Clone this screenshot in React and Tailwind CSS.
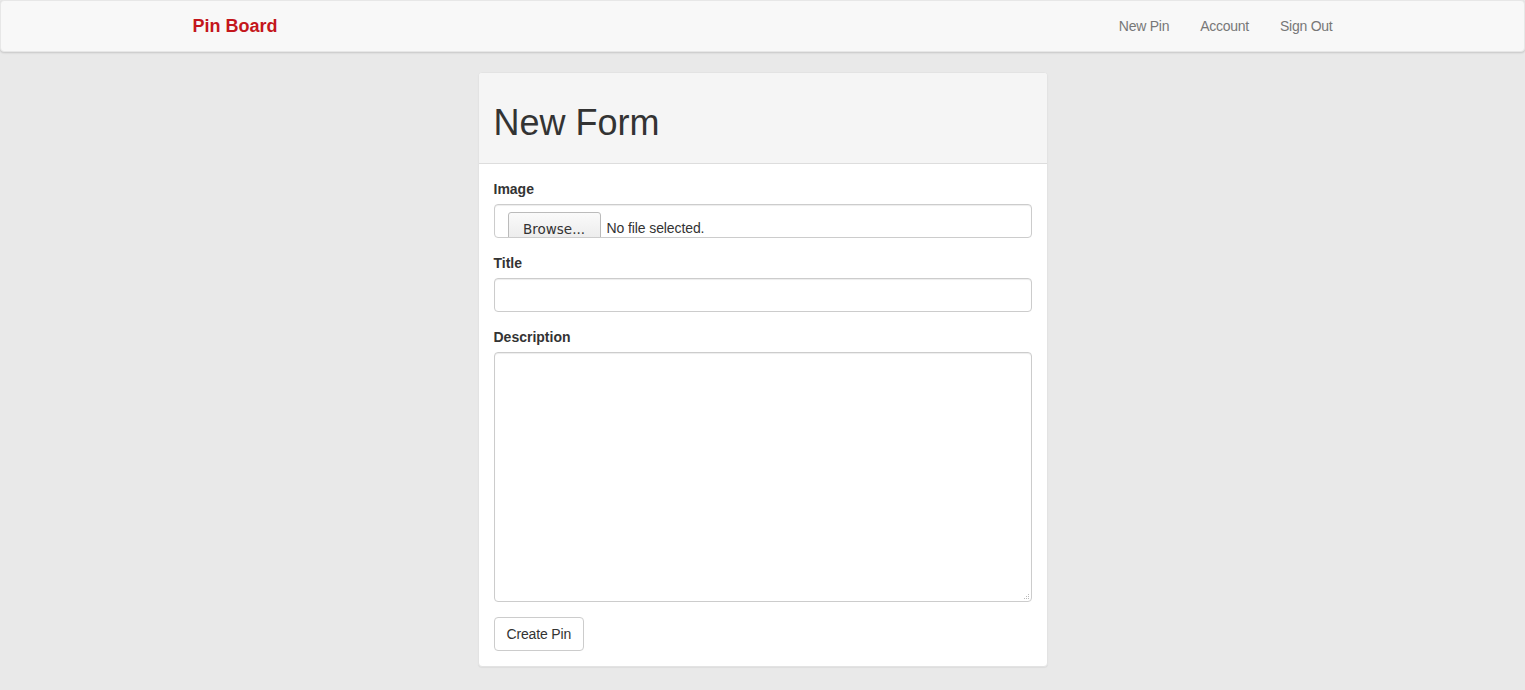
export default function App() {
  const font = { fontFamily: '"Liberation Sans", Arial, sans-serif' };
  return (
    <div className="min-h-[690px] bg-[#e9e9e9] text-[14px] leading-[20px] text-[#333]" style={font}>
      <nav className="h-[52px] bg-[#f8f8f8] border border-[#e7e7e7] rounded-[4px] shadow-[0_1px_2px_rgba(0,0,0,0.15)]">
        <div className="w-[1170px] mx-auto flex items-center justify-between h-[50px]">
          <a className="px-[15px] text-[18px] font-bold leading-[20px] text-[#c4161c]">Pin Board</a>
          <ul className="flex tracking-[-0.25px]">
            <li><a className="block pl-[15px] pr-[16px] leading-[20px] text-[#777]">New Pin</a></li>
            <li><a className="block pl-[15px] pr-[16px] leading-[20px] text-[#777]">Account</a></li>
            <li><a className="block pl-[15px] pr-[15px] leading-[20px] text-[#777]">Sign Out</a></li>
          </ul>
        </div>
      </nav>
      <div className="pt-[20px] flex justify-center">
        <div className="w-[570px] bg-white border border-[#e3e3e3] rounded-[4px] shadow-[0_1px_1px_rgba(0,0,0,0.05)]">
          <div className="bg-[#f5f5f5] border-b border-[#ddd] px-[15px] py-[10px] rounded-t-[3px]">
            <h1 className="mt-[20px] mb-[10px] text-[36px] leading-[39.6px] font-normal text-[#333]">New Form</h1>
          </div>
          <div className="p-[15px]">
            <div className="mb-[15px]">
              <label className="block mb-[5px] font-bold">Image</label>
              <div className="h-[34px] border border-[#ccc] rounded-[4px] overflow-hidden flex items-start pl-[13px] pt-[7px] shadow-[inset_0_1px_1px_rgba(0,0,0,0.075)]">
                <div className="w-[93px] h-[36px] border border-[#bbb] rounded-[3px] bg-gradient-to-b from-[#fafafa] to-[#e8e8e8] text-[13.5px] text-[#333] text-center pt-[7px] leading-[18px] shrink-0" style={{ fontFamily: '"DejaVu Sans", sans-serif' }}>Browse...</div>
                <span className="ml-[6px] pt-[7px] leading-[18px] text-[#333] tracking-[-0.1px]">No file selected.</span>
              </div>
            </div>
            <div className="mb-[15px]">
              <label className="block mb-[5px] font-bold">Title</label>
              <div className="h-[34px] border border-[#ccc] rounded-[4px] shadow-[inset_0_1px_1px_rgba(0,0,0,0.075)]"></div>
            </div>
            <div className="mb-[15px]">
              <label className="block mb-[5px] font-bold">Description</label>
              <div className="relative h-[250px] border border-[#ccc] rounded-[4px] shadow-[inset_0_1px_1px_rgba(0,0,0,0.075)]">
                <svg className="absolute right-[1px] bottom-[1px]" width="7" height="7" viewBox="0 0 7 7">
                  <rect x="5" y="1" width="1" height="1" fill="#bbb" />
                  <rect x="3" y="3" width="1" height="1" fill="#bbb" />
                  <rect x="5" y="3" width="1" height="1" fill="#bbb" />
                  <rect x="1" y="5" width="1" height="1" fill="#bbb" />
                  <rect x="3" y="5" width="1" height="1" fill="#bbb" />
                  <rect x="5" y="5" width="1" height="1" fill="#bbb" />
                </svg>
              </div>
            </div>
            <button className="h-[34px] px-[12px] border border-[#ccc] rounded-[4px] bg-white text-[#333] text-[14px] leading-[20px] tracking-[-0.15px]" style={font}>Create Pin</button>
          </div>
        </div>
      </div>
    </div>
  );
}
